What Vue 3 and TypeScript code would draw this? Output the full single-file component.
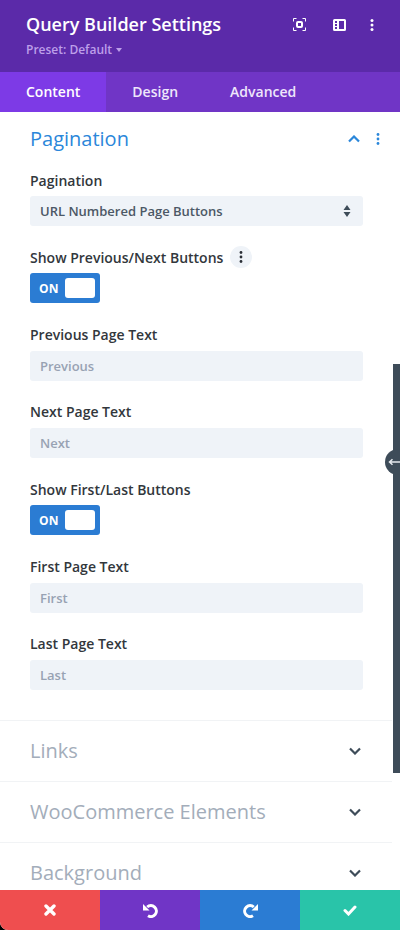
<script setup lang="ts">
const tabs = ['Content', 'Design', 'Advanced']
const closed = ['Links', 'WooCommerce Elements', 'Background']
</script>

<template>
  <div class="modal">
    <header class="head">
      <div>
        <h1 class="title">Query Builder Settings</h1>
        <div class="preset">Preset: Default <span class="caret"></span></div>
      </div>
      <div class="head-icons">
        <svg width="13" height="13" viewBox="0 0 13 13" fill="none" stroke="#fff">
          <path d="M.5 3.500V.5h3M9.500.5h3v3M12.500 9.500v3h-3M3.500 12.500h-3v-3" />
          <rect x="4" y="4" width="5" height="5" rx="1" stroke-width="2" />
        </svg>
        <svg width="13" height="12" viewBox="0 0 13 12">
          <path fill="#fff" fill-rule="evenodd" d="M1.500 0h10A1.500 1.500 0 0 1 13 1.500v9a1.500 1.500 0 0 1-1.500 1.500h-10A1.500 1.500 0 0 1 0 10.500v-9A1.500 1.500 0 0 1 1.500 0zM6 2v8h5V2zM2 2v2h2V2zM2 5v2h2V5zM2 8v2h2V8z" />
        </svg>
        <svg class="dots" width="4" height="12" viewBox="0 0 4 12" fill="#fff">
          <circle cx="2" cy="1.500" r="1.500" /><circle cx="2" cy="6" r="1.500" /><circle cx="2" cy="10.500" r="1.500" />
        </svg>
      </div>
    </header>

    <nav class="tabs">
      <div v-for="(t, i) in tabs" :key="t" class="tab" :class="{ active: i === 0 }">{{ t }}</div>
    </nav>

    <main class="body">
      <section class="open">
        <div class="sec-head">
          <h2 class="sec-title blue">Pagination</h2>
          <svg class="chev" width="12" height="8" viewBox="0 0 12 8" fill="none" stroke="#2b87da" stroke-width="2.200">
            <path d="M1 6.500l5-5 5 5" />
          </svg>
          <svg class="sec-dots" width="4" height="12" viewBox="0 0 4 12" fill="#2b87da">
            <circle cx="2" cy="1.500" r="1.400" /><circle cx="2" cy="6" r="1.400" /><circle cx="2" cy="10.500" r="1.400" />
          </svg>
        </div>

        <div class="field">
          <label class="lbl">Pagination</label>
          <div class="input select">
            URL Numbered Page Buttons
            <svg width="8" height="12" viewBox="0 0 8 12" fill="#3e4c59"><path d="M4 0l3.500 5H.5zM4 12L.5 7h7z" /></svg>
          </div>
        </div>

        <div class="field">
          <label class="lbl">
            Show Previous/Next Buttons
            <span class="opt">
              <svg width="4" height="12" viewBox="0 0 4 12" fill="#2a2f36">
                <circle cx="2" cy="1.500" r="1.400" /><circle cx="2" cy="6" r="1.400" /><circle cx="2" cy="10.500" r="1.400" />
              </svg>
            </span>
          </label>
          <div class="toggle"><span>ON</span><i></i></div>
        </div>

        <div class="field">
          <label class="lbl">Previous Page Text</label>
          <div class="input ph">Previous</div>
        </div>
        <div class="field">
          <label class="lbl">Next Page Text</label>
          <div class="input ph">Next</div>
        </div>
        <div class="field">
          <label class="lbl">Show First/Last Buttons</label>
          <div class="toggle"><span>ON</span><i></i></div>
        </div>
        <div class="field">
          <label class="lbl">First Page Text</label>
          <div class="input ph">First</div>
        </div>
        <div class="field">
          <label class="lbl">Last Page Text</label>
          <div class="input ph">Last</div>
        </div>
      </section>

      <section v-for="c in closed" :key="c" class="shut">
        <h2 class="sec-title">{{ c }}</h2>
        <svg class="chev" width="12" height="8" viewBox="0 0 12 8" fill="none" stroke="#3e4c59" stroke-width="2.200">
          <path d="M1 1.500l5 5 5-5" />
        </svg>
      </section>
    </main>

    <div class="scrollbar"></div>
    <div class="resize">
      <svg width="12" height="8" viewBox="0 0 12 8" fill="none" stroke="#e6e9ee" stroke-width="1.500">
        <path d="M12 4H2M4.500 1.200L1.500 4l3 2.800" />
      </svg>
    </div>

    <footer class="foot">
      <button class="red">
        <svg width="12" height="12" viewBox="0 0 12 12" fill="none" stroke="#fff" stroke-width="3.400" stroke-linecap="round"><path d="M2 2l8 8M10 2l-8 8" /></svg>
      </button>
      <button class="purple">
        <svg width="15" height="15" viewBox="0 0 15 15" fill="none"><path d="M4.200 4A5.500 5.500 0 1 1 5 12.800" stroke="#fff" stroke-width="3" /><path d="M0 1v6.500h6.500z" fill="#fff" /></svg>
      </button>
      <button class="blue-bg">
        <svg width="15" height="15" viewBox="0 0 15 15" fill="none"><path d="M10.800 4A5.500 5.500 0 1 0 10 12.800" stroke="#fff" stroke-width="3" /><path d="M15 1v6.500H8.500z" fill="#fff" /></svg>
      </button>
      <button class="green">
        <svg width="14" height="11" viewBox="0 0 14 11" fill="none" stroke="#fff" stroke-width="3" stroke-linecap="round"><path d="M2 5.500l3.500 3.500L12 2" /></svg>
      </button>
    </footer>
  </div>
</template>

<style>
html,
body {
  margin: 0;
  background: #000;
}
</style>

<style scoped>
.modal {
  position: relative;
  width: 400px;
  height: 930px;
  display: flex;
  flex-direction: column;
  overflow: hidden;
  background: #fff;
  border-radius: 0 0 0 8px;
  font-family: 'Open Sans', sans-serif;
}

.head {
  height: 72px;
  box-sizing: border-box;
  padding: 11px 26px 0 26px;
  background: #5b2aa9;
  display: flex;
  justify-content: space-between;
  align-items: flex-start;
  flex: none;
}
.title {
  margin: 0;
  font-size: 18px;
  line-height: 26px;
  font-weight: 600;
  color: #fff;
}
.preset {
  margin-top: 5px;
  font-size: 12px;
  line-height: 16px;
  font-weight: 600;
  color: #bd9fe9;
}
.caret {
  display: inline-block;
  margin-left: 1px;
  vertical-align: 2px;
  border: 3px solid transparent;
  border-top: 4px solid #bd9fe9;
  border-bottom: 0;
}
.head-icons {
  display: flex;
  align-items: center;
  gap: 27px;
  margin-top: 7px;
}
.dots {
  margin-left: -3px;
}

.tabs {
  height: 40px;
  display: flex;
  background: #7035c6;
  flex: none;
}
.tab {
  padding: 0 26px;
  font-size: 14px;
  line-height: 40px;
  font-weight: 600;
  color: #eee6fb;
}
.tab.active {
  background: #7d3ae6;
  color: #fff;
}

.body {
  flex: 1;
  min-height: 0;
  overflow: hidden;
  width: 392px;
}
.open {
  width: 333px;
  padding: 12px 29px 30px 30px;
}
.sec-head {
  display: flex;
  align-items: center;
  height: 30px;
  margin-bottom: 15px;
}
.sec-title {
  margin: 0;
  font-size: 20px;
  line-height: 30px;
  font-weight: 400;
  color: #a3adba;
}
.sec-title.blue {
  color: #2b87da;
  flex: 1;
}
.sec-dots {
  margin-left: 16px;
  margin-right: -17px;
}
.chev {
  flex: none;
}

.field {
  margin-bottom: 20.33px;
}
.field:last-child {
  margin-bottom: 0;
}
.lbl {
  display: flex;
  align-items: center;
  gap: 7px;
  height: 22px;
  margin-bottom: 5px;
  font-size: 14px;
  font-weight: 600;
  color: #32373c;
}
.input {
  height: 30px;
  box-sizing: border-box;
  padding: 0 10px;
  display: flex;
  align-items: center;
  justify-content: space-between;
  background: #eff3f8;
  border-radius: 3px;
  font-size: 13px;
  font-weight: 600;
  color: #4c5866;
}
.input.select svg {
  margin-right: 2px;
}
.input.ph {
  color: #98a2b3;
}
.opt {
  width: 22px;
  height: 22px;
  border-radius: 50%;
  background: #eff3f8;
  display: flex;
  align-items: center;
  justify-content: center;
}
.toggle {
  width: 70px;
  height: 30px;
  box-sizing: border-box;
  padding: 5px;
  display: flex;
  align-items: center;
  justify-content: space-between;
  border-radius: 3px;
  background: #2b7cd3;
  font-size: 12px;
  font-weight: 700;
  letter-spacing: 0.3px;
  color: #fff;
}
.toggle span {
  padding-left: 4px;
}
.toggle i {
  width: 30px;
  height: 20px;
  border-radius: 3px;
  background: #fff;
}

.shut {
  height: 61px;
  box-sizing: border-box;
  padding: 0 31px 0 30px;
  display: flex;
  align-items: center;
  justify-content: space-between;
  border-top: 1px solid #f1f3f5;
}

.scrollbar {
  position: absolute;
  left: 393px;
  top: 364px;
  width: 7px;
  height: 409px;
  background: #3e4c59;
}
.resize {
  position: absolute;
  left: 385px;
  top: 449px;
  width: 26px;
  height: 26px;
  border-radius: 50%;
  background: #3e4c59;
  display: flex;
  align-items: center;
  padding-left: 3px;
  box-sizing: border-box;
}

.foot {
  flex: none;
  height: 40px;
  display: grid;
  grid-template-columns: repeat(4, 1fr);
}
.foot button {
  border: 0;
  padding: 0;
  display: flex;
  align-items: center;
  justify-content: center;
}
.red {
  background: #ef4e4f;
}
.purple {
  background: #7035c6;
}
.blue-bg {
  background: #2b7cd3;
}
.green {
  background: #29c4a9;
}
</style>
